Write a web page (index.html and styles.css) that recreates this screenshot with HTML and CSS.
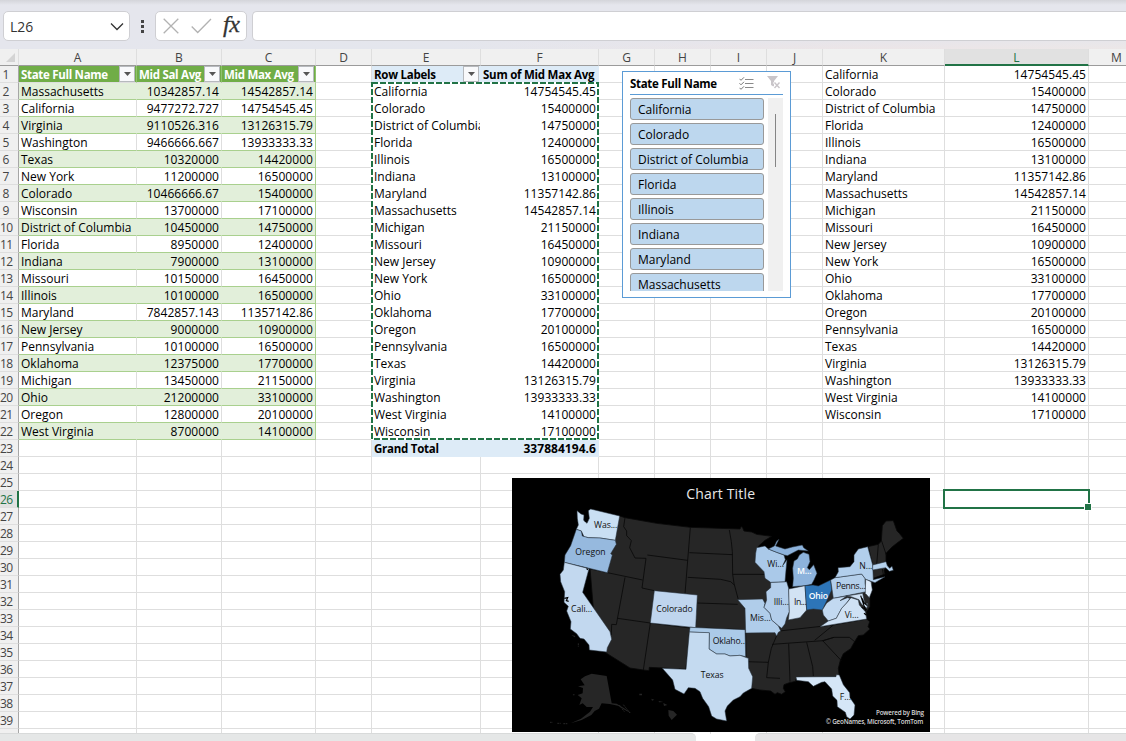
FILE: index.html
```html
<!DOCTYPE html>
<html lang="en">
<head>
<meta charset="utf-8">
<title>Workbook</title>
<link rel="stylesheet" href="styles.css">
</head>
<body>
<div class="app">
  <div class="ribbon-edge"></div>
  <div class="formula-bar">
    <div class="name-box"><span>L26</span>
      <svg width="14" height="9" viewBox="0 0 14 9"><path d="M1 1.5l6 6 6-6" fill="none" stroke="#333" stroke-width="1.3"/></svg>
    </div>
    <div class="dots"><i></i><i></i><i></i></div>
    <div class="fx-box">
      <svg width="16" height="16" viewBox="0 0 16 16"><path d="M.7.7l14.6 14.6M15.300.7L.7 15.300" fill="none" stroke="#b2b2b2" stroke-width="1.3"/></svg>
      <svg width="21" height="16" viewBox="0 0 21 16"><path d="M.7 8.500l6 6L20 1" fill="none" stroke="#b2b2b2" stroke-width="1.3"/></svg>
      <span class="fx">fx</span>
    </div>
    <div class="formula-input"></div>
  </div>
  <div class="sheet">
    <div class="grid" id="grid"></div>
    <div class="marquee"><svg width="228" height="358"><rect x="1" y="1" width="226" height="356" fill="none" stroke="#fff" stroke-width="2"/><rect x="1" y="1" width="226" height="356" fill="none" stroke="#217346" stroke-width="2" stroke-dasharray="6 2"/></svg></div>
    <div class="cursor"><i></i></div>
    <div class="slicer">
      <div class="slicer-head"><b>State Full Name</b>
        <svg class="multi" width="15" height="13" viewBox="0 0 15 13"><path d="M6 2.500h8.500M6 6.500h8.500M6 10.500h8.500" stroke="#8a8a8a"/><path d="M.5 1.800l1.500 1.500L5 .3M.5 6.300l1.500 1.500L5 4.800M.5 10.800l1.500 1.500L5 9.300" fill="none" stroke="#777"/></svg>
        <svg class="clear" width="15" height="14" viewBox="0 0 15 14"><path d="M0 0h11L7 5v6l-3-2V5z" fill="#c9c5c9"/><path d="M7 6l6 6M13 6l-6 6" stroke="#fff" stroke-width="3"/><path d="M7.500 6.500l5 5.500M12.500 6.500l-5 5.500" stroke="#c9c5c9" stroke-width="1.400"/></svg>
      </div>
      <div class="slicer-body">
        <div class="slicer-list"><span>California</span><span>Colorado</span><span>District of Columbia</span><span>Florida</span><span>Illinois</span><span>Indiana</span><span>Maryland</span><span>Massachusetts</span></div>
        <div class="slicer-track"><i></i></div>
      </div>
    </div>
    <div class="chart">
      <svg width="418" height="254" viewBox="6 9 1254 762">
        <g class="land">
          <path d="M329 123L345 128 440 145 541 157 690 162 693 155 697 156 702 168 725 171 740 178 785 184 765 196 745 214 760 260 800 280 790 330 840 370 880 370 920 350 960 340 990 320 1040 270 1073 215 1105 208 1114 198 1117 152 1128 138 1150 137 1161 168 1169 176 1180 190 1160 205 1145 217 1128 235 1128 262 1134 274 1122 285 1125 297 1090 310 1080 360 1080 395 1070 410 1070 432 1079 440 1074 455 1080 462 1060 480 1045 482 1032 503 1022 521 1000 536 991 556 985 580 988 604 940 606 858 612 857 619 838 623 822 629 820 640 826 650 815 658 802 653 795 658 782 648 750 645 725 640 705 570 600 560 530 560 528 583 418 577 417 587 400 585 360 579 287 533 250 400 240 280 290 200Z"/>
          <path d="M345 128L341 155 350 168 350 182 364 197 359 218 375 249 408 250 M412 240L533 256 M541 157L525 356 M408 250L396 339 433 347 M292 293L398 315 M237 281L292 293 M345 307L319 449 305 448 304 480 M323 430L421 444 M421 444L400 585 M421 444L540 459 528 583 M538 233L668 239 M533 307L632 313 662 320 673 330 M562 384L683 388 M555 458L705 464 M658 165L664 200 667 230 668 298 M668 298L769 298 M668 298L672 325 685 374 M707 474L708 550 M708 560L775 562 M800 482L784 520 775 562 770 608 810 610 M786 508L940 497 972 487 M808 468L970 450 1070 432 M836 506L840 620 M890 502L908 575 910 603 M972 487L938 497 995 558 M972 487L1018 487 1034 500 M914 496L970 450 M1105 208L1100 270 M1115 198L1129 240 M1075 215L1088 270 M1117 282L1120 298"/>
        </g>
        <g class="states">
          <path fill="#c9dff3" d="M201 107L213 117 222 120 221 136 231 145 238 130 235 107 242 102 329 123 316 196 270 189 235 188 222 185 214 168 199 163 205 150 202 130Z"/>
          <path fill="#96b9de" d="M199 163L214 168 217 183 235 188 270 189 316 196 319 208 302 236 307 240 292 293 163 262 165 240 182 212Z"/>
          <path fill="#c2d8ef" d="M163 262L237 281 218 352 300 470 305 493 292 518 290 531 238 525 237 510 222 492 210 490 200 476 181 462 183 440 170 408 175 394 162 382 164 350 152 320 150 298 160 285Z"/>
          <path fill="#bfd5ee" d="M433 347L562 360 557 458 421 444Z"/>
          <path fill="#abcae8" d="M540 457L705 464 707 545 690 541 660 543 645 537 620 537 597 522 598 474 538 471Z"/>
          <path fill="#c4daf0" d="M538 471L598 473 597 522 620 537 645 537 660 543 690 541 715 550 716 580 728 605 725 640 700 654 690 665 670 675 652 693 645 708 650 738 620 732 605 723 596 695 578 670 570 650 555 640 535 638 522 657 495 643 488 615 457 580 528 583Z"/>
          <path fill="#b0cdea" d="M683 374L758 372 765 385 762 397 780 415 785 435 805 452 812 468 805 472 800 483 795 473 707 474 705 400Z"/>
          <path fill="#b3ceeb" d="M782 322L830 320 836 340 838 410 830 428 825 447 815 460 805 452 785 435 780 415 762 397 770 375 768 350 782 338Z"/>
          <path fill="#aac9e9" d="M740 218L765 213 775 222 800 232 822 240 826 254 818 272 831 254 828 285 825 320 782 322 765 310 762 290 735 262 737 235Z"/>
          <path fill="#8db3dc" d="M775 222L793 213 800 198 807 193 797 213 825 222 847 216 877 210 881 218 895 228 865 225 832 242 823 240 800 232ZM868 240L880 232 897 238 900 260 892 278 898 284 911 269 921 295 912 315 905 328 885 332 848 335 850 310 848 280 852 258 862 252Z"/>
          <path fill="#d2e3f4" d="M836 342L885 332 890 405 870 428 835 435 838 410Z"/>
          <path fill="#2d75b8" d="M885 332L909 330 925 333 962 315 965 345 950 378 937 405 910 402 890 405Z"/>
          <path fill="#b4cfea" d="M962 315L975 308 1055 297 1065 310 1065 325 1069 350 970 370Z"/>
          <path fill="#b2cfec" d="M975 308L985 290 984 278 1020 275 1032 260 1032 240 1045 222 1073 215 1088 270 1090 314 1125 305 1095 323 1067 313 1055 297Z"/>
          <path fill="#dfecfa" d="M1067 313L1083 320 1087 345 1078 368 1066 355Z"/>
          <path fill="#b6d2ee" d="M1088 270L1128 260 1132 272 1139 280 1146 274 1150 286 1138 289 1127 278 1088 285Z"/>
          <path fill="#c2d9f1" d="M970 370L1010 363 990 377 1012 368 1020 370 1010 384 995 400 979 430 955 438 940 420 937 405 950 384Z"/>
          <path fill="#cfe1f4" d="M930 455L955 438 979 430 995 400 1010 384 1023 368 1045 375 1048 390 1066 410 1070 432ZM1010 363L1058 355 1065 388 1073 385 1071 400 1054 387 1047 374 1023 365Z"/>
          <path fill="#d5e6f7" d="M858 606L978 605 979 599 988 600 1000 629 1019 653 1020 668 1035 690 1032 720 1020 732 1010 725 1006 712 982 695 981 676 968 663 965 642 945 620 935 622 910 634 895 620 860 616Z"/>
        </g>
        <path class="bay" d="M1052 362L1062 392 1068 408M1057 370L1061 382 1072 392M1055 397L1070 404M1062 415L1069 420M232 112L227 126 234 130 225 140M163 370L173 368 169 377 176 379M230 280L233 285"/>
        <path fill="#262626" d="M212 613L225 604 245 596 290 603 305 685 320 686 340 698 365 715 350 708 324 692 299 687 275 685 267 701 254 708 244 720 215 735 182 745 213 731 240 710 249 696 230 696 218 685 208 690 215 670 203 660 218 655 219 639 204 634 224 631ZM475 705L490 708 501 719 485 735 476 722ZM388 656l8 0 0 5-8 0ZM424 671l9 3-7 3ZM446 678l14 3-13 1ZM460 684l12 6-10 3ZM188 658l6 0-2 4ZM184 480l12 3-2 4Z"/>
        <path d="M120 742h8M142 745h10M160 746h12M205 505v10M328 690l15 20M340 689l20 25" stroke="#262626" stroke-width="3" stroke-dasharray="5 2"/>
        <g class="labels">
          <text x="252" y="158" textLength="70">Was...</text>
          <text x="196" y="239" textLength="91">Oregon</text>
          <text x="183" y="410" textLength="64">Cali...</text>
          <text x="439" y="410" textLength="109">Colorado</text>
          <text x="608" y="506" textLength="97">Oklaho..</text>
          <text x="572" y="608" textLength="69">Texas</text>
          <text x="720" y="437" textLength="62">Mis...</text>
          <text x="791" y="389" textLength="46">Illi...</text>
          <text x="772" y="275" textLength="50">Wi...</text>
          <text class="light" x="861" y="297" textLength="44">M...</text>
          <text x="852" y="389" textLength="38">In...</text>
          <text class="light" x="896" y="371" textLength="58">Ohio</text>
          <text x="978" y="341" textLength="89">Penns...</text>
          <text x="1048" y="281" textLength="39">N...</text>
          <text x="1004" y="428" textLength="42">Vi...</text>
          <text x="989" y="675" textLength="34">F...</text>
        </g>
        <text class="title" x="529" y="72" textLength="206">Chart Title</text>
        <g class="credit"><text x="1098" y="720" textLength="144">Powered by Bing</text><text x="947" y="747" textLength="293">© GeoNames, Microsoft, TomTom</text></g>
      </svg>
    </div>
  </div>
  <div class="bottom-edge"><i class="left"></i><i class="right"></i></div>
</div>
<script src="app.js"></script>
</body>
</html>
```

FILE: styles.css
```css
* { box-sizing: border-box; }
body { margin: 0; overflow: hidden; font-family: "Open Sans", "Noto Sans", sans-serif; font-size: 12px; color: #000; }
svg { display: block; flex: none; }
.app { position: relative; display: flex; flex-direction: column; width: 1126px; height: 741px; overflow: hidden; background: #fff; }
.ribbon-edge { flex: none; height: 1px; margin-left: 7px; background: #cfcfd2; }
.app::before { content: ""; position: absolute; inset: 0 0 auto; height: 49px; background: linear-gradient(#d4d5da, #e5e6ed 5px, #e5e6ed 36px, transparent), linear-gradient(90deg, #e5e6ed, #e4e6ed 40%, #ece5e7 75%, #ece7e7); }
.formula-bar { position: relative; flex: none; display: flex; height: 48px; padding: 10px 0 8px 3px; }
.name-box, .fx-box, .formula-input { height: 30px; background: #fff; border: 1px solid #cfcfd3; border-radius: 5px; }
.name-box { display: flex; align-items: center; justify-content: space-between; width: 127px; padding: 0 5px 0 6px; font-size: 14.5px; color: #333; }
.name-box span { transform: scaleX(.96); transform-origin: left; }
.dots { display: flex; flex-direction: column; justify-content: center; gap: 2px; width: 25px; padding-left: 11px; }
.dots i { width: 3px; height: 3px; background: #444; }
.fx-box { display: flex; align-items: center; width: 92px; padding-left: 7px; gap: 12px; }
.fx { font: italic 24px/26px "Liberation Serif", serif; letter-spacing: -.3px; color: #333; -webkit-text-stroke: .3px #333; margin: -4px 0 0 -1px; }
.formula-input { flex: 1; margin-left: 5px; border-right: 0; border-radius: 5px 0 0 5px; }
.sheet { position: relative; flex: none; height: 685px; overflow: hidden; }
.grid { display: grid; grid-template-columns: 19px 118px 85px 94px 56px 109px 118px 56px 56px 56px 56px 122px 144px 56px; grid-auto-rows: 17px; width: 1144px; }
.cell { height: 17px; padding: 0 2px; border-right: 1px solid #dedede; border-bottom: 1px solid #dedede; line-height: 18px; white-space: nowrap; overflow: hidden; }
.num { text-align: right; letter-spacing: .05px; }
.head { padding: 0; background: #f0f0f0; border-bottom-color: #9b9b9b; text-align: center; font-size: 12px; line-height: 17px; color: #444; }
.head.on { background: #e1e1e1; color: #217346; border-bottom: 2px solid #217346; }
.rowno { padding: 0; background: #f0f0f0; border-right-color: #a6a6a6; line-height: 18px; letter-spacing: -.6px; text-align: left; color: #444; }
.rowno.on { background: #e1e1e1; color: #217346; border-right: 2px solid #217346; }
.corner { display: flex; align-items: flex-end; justify-content: flex-end; padding: 0 3px 3px 0; }
.band { background: #e2efda; border-right-color: #e2efda; }
.table { border-bottom-color: #a9d08e; }
.col-c.table { border-right-color: #a9d08e; }
.table-head { display: flex; justify-content: space-between; padding-right: 1px; font-weight: 700; font-size: 11.5px; letter-spacing: -.3px; color: #fff; background: #70ad47; border-right-color: #8fc16d; }
.pivot-head, .pivot-total { display: flex; justify-content: space-between; font-weight: 700; font-size: 11.5px; letter-spacing: -.25px; background: #ddebf7; border-color: #ddebf7; }
.pivot-head { padding-right: 1px; }
.pivot-total .sum { font-size: 12px; letter-spacing: .05px; }
.pivot { border-color: #fff; }
.drop { flex: none; display: flex; align-items: center; justify-content: center; width: 16px; height: 16px; border: 1px solid #b6b9bd; background: #f8f9fb; }
.drop svg { margin-top: -1px; }
.marquee { position: absolute; left: 371px; top: 33px; }
.cursor { position: absolute; left: 943px; top: 440px; width: 147px; height: 20px; border: 2px solid #217346; }
.cursor i { position: absolute; right: -3px; bottom: -3px; width: 6px; height: 6px; background: #217346; outline: 1px solid #fff; }
.slicer { position: absolute; left: 622px; top: 22px; width: 169px; height: 227px; padding: 0 7px; border: 1px solid #5b9bd5; background: #fff; }
.slicer-head { display: flex; align-items: center; height: 23px; border-bottom: 1px solid #5b9bd5; font-size: 11.5px; letter-spacing: -.3px; }
.multi { margin-left: auto; }
.clear { margin: 0 1px 0 13px; }
.slicer-body { display: flex; justify-content: space-between; height: 193px; margin-top: 3px; overflow: hidden; }
.slicer-list { display: flex; flex-direction: column; gap: 3px; width: 134px; }
.slicer-list span { flex: none; height: 22px; padding-left: 7px; border: 1px solid #999; border-radius: 3px; background: #bdd7ee; line-height: 22px; }
.slicer-track { width: 15px; background: #f0f0f0; }
.slicer-track i { display: block; width: 1px; height: 53px; margin: 16px 0 0 7px; background: #858585; }
.chart { position: absolute; left: 512px; top: 429px; width: 418px; height: 254px; background: #000; }
.land { fill: #262626; stroke: #090909; stroke-width: 2.5; }
.land path + path { fill: none; }
.states { stroke: #26323d; stroke-width: 1.6; stroke-linejoin: round; }
.bay { fill: none; stroke: #000; stroke-width: 3.5; }
.labels text { font-size: 26px; fill: #111; }
.labels .light { fill: #fff; font-weight: 600; }
.title { font-size: 42px; fill: #e8e8e8; }
.credit { font-size: 19px; font-weight: 600; fill: #d8d8d8; }
.bottom-edge { position: relative; display: flex; justify-content: space-between; flex: none; height: 8px; }
.bottom-edge i { height: 9px; margin-top: -1px; background: #e5e7e7; border-top: 1px solid #d8dada; }
.bottom-edge .left { width: 696px; border-radius: 0 5px 0 0; }
.bottom-edge .right { width: 371px; border-radius: 5px 0 0 0; background: #e6e5e6; }
```

FILE: app.js
```js
const table = `Massachusetts|10342857.14|14542857.14
California|9477272.727|14754545.45
Virginia|9110526.316|13126315.79
Washington|9466666.667|13933333.33
Texas|10320000|14420000
New York|11200000|16500000
Colorado|10466666.67|15400000
Wisconsin|13700000|17100000
District of Columbia|10450000|14750000
Florida|8950000|12400000
Indiana|7900000|13100000
Missouri|10150000|16450000
Illinois|10100000|16500000
Maryland|7842857.143|11357142.86
New Jersey|9000000|10900000
Pennsylvania|10100000|16500000
Oklahoma|12375000|17700000
Michigan|13450000|21150000
Ohio|21200000|33100000
Oregon|12800000|20100000
West Virginia|8700000|14100000`.split('\n').map(r => r.split('|'));
const pivot = table.map(r => [r[0], r[2]]).sort((a, b) => a[0] < b[0] ? -1 : 1);
const grid = document.getElementById('grid');
const drop = '<span class="drop"><svg width="7" height="4"><path d="M0 0h7L3.500 4z" fill="#555"/></svg></span>';

function cell(cls, html) {
  const el = document.createElement('div');
  el.className = 'cell ' + cls;
  el.innerHTML = html || '';
  grid.append(el);
}

cell('head corner', '<svg width="9" height="9"><path d="M9 0v9H0z" fill="#d4d4d4"/></svg>');
for (const c of 'ABCDEFGHIJKLM') cell('head' + (c === 'L' ? ' on' : ''), c);

for (let r = 1; r <= 40; r++) {
  cell('rowno' + (r === 26 ? ' on' : ''), r < 10 ? '&nbsp;' + r : r < 40 ? r : '');
  const t = table[r - 2];
  if (r === 1) {
    ['State Full Name', 'Mid Sal Avg', 'Mid Max Avg'].forEach(n => cell('table-head', n + drop));
  } else if (t) {
    const b = 'table ' + (r % 2 ? '' : 'band ');
    cell(b, t[0]);
    cell(b + 'num', t[1]);
    cell(b + 'num col-c', t[2]);
  } else for (let i = 0; i < 3; i++) cell('');
  cell('');
  if (r === 1) {
    cell('pivot-head', 'Row Labels' + drop);
    cell('pivot-head', 'Sum of Mid Max Avg');
  } else if (r < 23) {
    cell('pivot', pivot[r - 2][0]);
    cell('pivot num', pivot[r - 2][1]);
  } else if (r === 23) {
    cell('pivot-total', 'Grand Total');
    cell('pivot-total', '<span></span><span class="sum">337884194.6</span>');
  } else { cell(''); cell(''); }
  for (let i = 0; i < 4; i++) cell('');
  const k = pivot[r - 1];
  cell('', k && k[0]);
  cell('num', k && k[1]);
  cell('');
}
```
